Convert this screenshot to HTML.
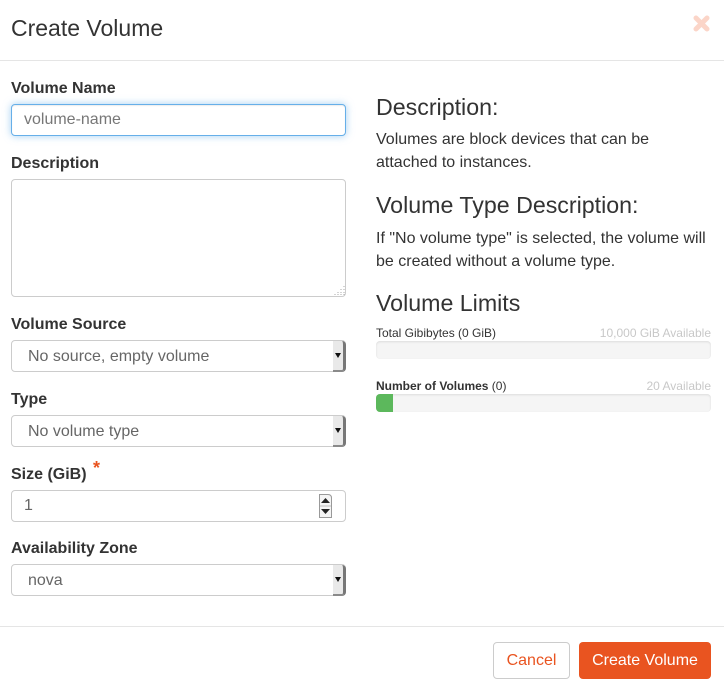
<!DOCTYPE html>
<html><head><meta charset="utf-8"><style>
html,body{margin:0;padding:0;background:#fff}
body{width:724px;height:693px;position:relative;overflow:hidden;font-family:"Liberation Sans",sans-serif;color:#333}
.a{position:absolute;white-space:nowrap}
.lb{font-weight:bold;font-size:16px;line-height:20px;left:11px;color:#333}
.box{position:absolute;left:11px;width:333px;border:1px solid #ccc;border-radius:4px;background:#fff}
.t{font-size:16px;line-height:20px;color:#555}
.h{font-size:23.2px;line-height:26px;left:376px;color:#333}
.p{font-size:16px;line-height:23px;left:376px;color:#333}
.sa{position:absolute;left:333px;width:13px;height:31px;background:#e9e9e9;border-right:3px solid #777;border-bottom:2px solid #8a8a8a;box-sizing:border-box;border-radius:0 4px 4px 0}
.sa i{position:absolute;left:2px;top:12px;width:0;height:0;border-left:3.5px solid transparent;border-right:3.5px solid transparent;border-top:5px solid #111}
.bar{position:absolute;left:376px;width:335px;height:18px;background:#f5f5f5;border-radius:4px;box-shadow:inset 0 1px 2px rgba(0,0,0,.1)}
.s{font-size:12px;line-height:14px}
.av{color:#c8c8c8;right:13px}
</style></head><body>
<div class="a" style="left:11px;top:14px;font-size:23px;line-height:28px;color:#333">Create Volume</div>
<svg class="a" style="left:692px;top:14px" width="20" height="20" viewBox="0 0 20 20"><path d="M4 4L15 15M15 4L4 15" stroke="#fbd5c8" stroke-width="5" stroke-linecap="round"/></svg>
<div class="a" style="left:0;top:60px;width:724px;height:1px;background:#e5e5e5"></div>

<div class="a lb" style="top:79px">Volume Name</div>
<div class="box" style="top:104px;height:30px;border-color:#66afe9;box-shadow:inset 0 1px 1px rgba(0,0,0,.075),0 0 8px rgba(102,175,233,.6)"><div class="a t" style="left:12px;top:5px;color:#777">volume-name</div></div>

<div class="a lb" style="top:154px">Description</div>
<div class="box" style="top:179px;height:116px">
<svg class="a" style="right:0;bottom:0" width="11" height="11"><path d="M10 1v1M10 4v1M7 4v1M10 7v1M7 7v1M4 7v1M10 9v1M7 9v1M4 9v1M1 9v1" stroke="#aaa" stroke-width="1"/></svg>
</div>

<div class="a lb" style="top:315px">Volume Source</div>
<div class="box" style="top:340px;height:30px"><div class="a t" style="left:16px;top:6px;color:#666">No source, empty volume</div></div>
<div class="sa" style="top:341px"><i></i></div>

<div class="a lb" style="top:390px">Type</div>
<div class="box" style="top:415px;height:30px"><div class="a t" style="left:16px;top:6px;color:#666">No volume type</div></div>
<div class="sa" style="top:416px"><i></i></div>

<div class="a lb" style="top:465px">Size (GiB)</div>
<div class="a" style="left:93px;top:458px;font-size:18px;line-height:20px;font-weight:bold;color:#e9531f">*</div>
<div class="box" style="top:490px;height:30px"><div class="a t" style="left:12px;top:5px;color:#666">1</div></div>
<svg class="a" style="left:319px;top:494px" width="13" height="24" viewBox="0 0 13 24"><path d="M.5 23.500V.5H9Q12.500 .5 12.500 4V23.500Z" fill="#f4f4f4" stroke="#999"/><path d="M1 12h11" stroke="#bbb"/><path d="M2 9L6.500 4L11 9Z" fill="#222"/><path d="M2 15L6.500 20L11 15Z" fill="#222"/></svg>

<div class="a lb" style="top:539px">Availability Zone</div>
<div class="box" style="top:564px;height:30px"><div class="a t" style="left:16px;top:6px;color:#666">nova</div></div>
<div class="sa" style="top:565px"><i></i></div>

<div class="a h" style="top:94px">Description:</div>
<div class="a p" style="top:128px">Volumes are block devices that can be<br>attached to instances.</div>
<div class="a h" style="top:192px">Volume Type Description:</div>
<div class="a p" style="top:227px">If "No volume type" is selected, the volume will<br>be created without a volume type.</div>
<div class="a h" style="top:290px">Volume Limits</div>

<div class="a s" style="left:376px;top:326px">Total Gibibytes (0 GiB)</div>
<div class="a s av" style="top:326px">10,000 GiB Available</div>
<div class="bar" style="top:341px"></div>
<div class="a s" style="left:376px;top:379px"><b>Number of Volumes</b> (0)</div>
<div class="a s av" style="top:379px">20 Available</div>
<div class="bar" style="top:394px"><div style="width:17px;height:18px;background:#5cb85c;border-radius:4px 0 0 4px"></div></div>

<div class="a" style="left:0;top:626px;width:724px;height:1px;background:#e5e5e5"></div>
<div class="a" style="left:493px;top:642px;width:75px;height:35px;border:1px solid #ccc;border-radius:4px;background:#fff;color:#e95420;font-size:16px;line-height:36px;text-align:center">Cancel</div>
<div class="a" style="left:579px;top:642px;width:132px;height:37px;border-radius:4px;background:#e95420;color:#fff;font-size:16px;line-height:38px;text-align:center">Create Volume</div>
</body></html>
